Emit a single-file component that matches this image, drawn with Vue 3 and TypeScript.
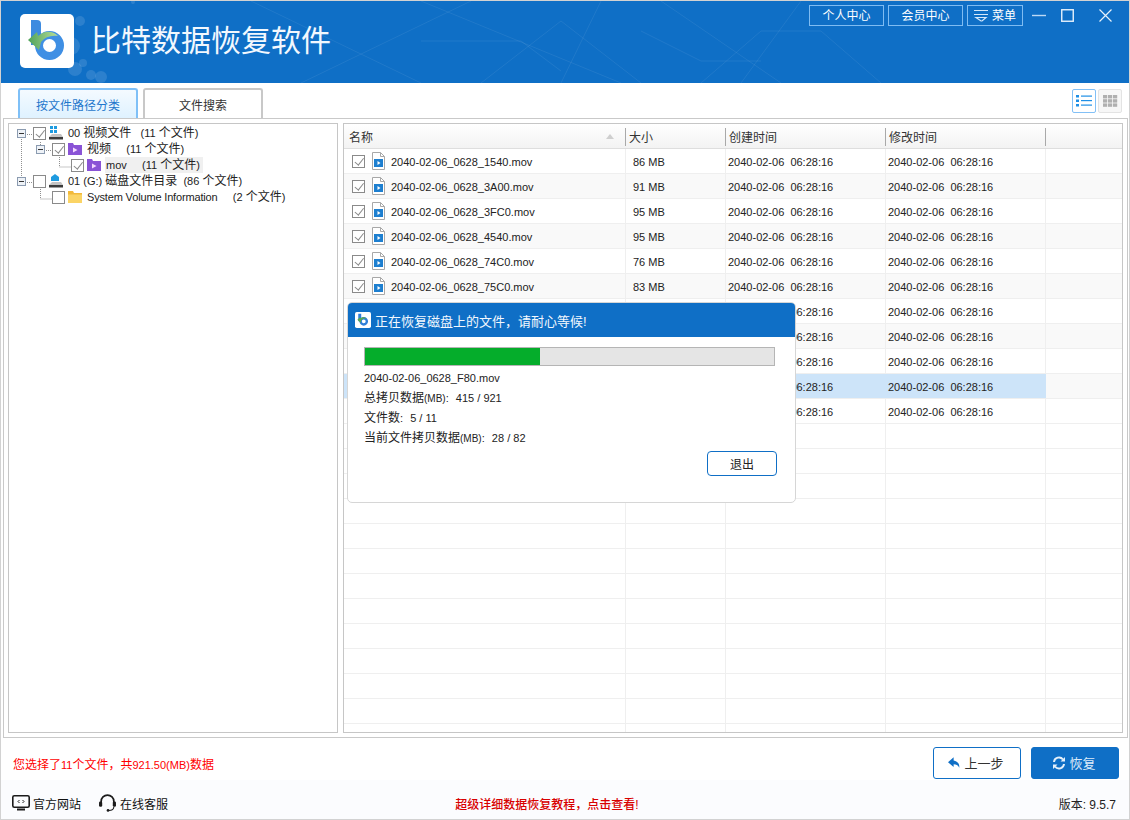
<script setup lang="ts">
interface Row { name: string; size: string; time: string; selected?: boolean }
const t = '2040-02-06  06:28:16'
const files: Row[] = [
  { name: '2040-02-06_0628_1540.mov', size: '86 MB', time: t },
  { name: '2040-02-06_0628_3A00.mov', size: '91 MB', time: t },
  { name: '2040-02-06_0628_3FC0.mov', size: '95 MB', time: t },
  { name: '2040-02-06_0628_4540.mov', size: '95 MB', time: t },
  { name: '2040-02-06_0628_74C0.mov', size: '76 MB', time: t },
  { name: '2040-02-06_0628_75C0.mov', size: '83 MB', time: t },
  { name: '2040-02-06_0628_8A40.mov', size: '88 MB', time: t },
  { name: '2040-02-06_0628_9B80.mov', size: '90 MB', time: t },
  { name: '2040-02-06_0628_C100.mov', size: '84 MB', time: t },
  { name: '2040-02-06_0628_F80.mov', size: '82 MB', time: t, selected: true },
  { name: '2040-02-06_0628_FA40.mov', size: '81 MB', time: t },
]
const blanks = Array.from({ length: 13 }, (_, i) => i)
const columns = ['名称', '大小', '创建时间', '修改时间']
const lines = [
  'M250 0L420 82', 'M300 82L470 0', 'M420 0L620 82', 'M480 82L560 20L640 82', 'M660 0L780 82',
  'M600 0L560 82', 'M700 82L760 30H820L880 82', 'M420 40H520L560 70', 'M640 30L700 60H760', 'M800 0L740 82',
]
const dots = [[79, 20, 5], [70, 45, 9], [82, 62, 4], [74, 68, 7], [90, 74, 5], [100, 76, 6], [132, 1, 2], [62, 36, 2]]
</script>

<template>
  <div class="window">
    <header class="top">
      <svg class="deco" viewBox="0 0 1128 82" aria-hidden="true">
        <path v-for="(l, i) in lines" :key="i" :d="l" fill="none" stroke="#fff" stroke-opacity=".07" />
        <circle v-for="(d, i) in dots" :key="i" :cx="d[0]" :cy="d[1]" :r="d[2]" fill="#fff" fill-opacity=".12" />
      </svg>
      <div class="brand">
        <svg class="logo" viewBox="0 0 54 54">
          <defs>
            <linearGradient id="arrowGrad" x1="0" y1="0" x2="1" y2="0">
              <stop offset="0" stop-color="#4fa35a" />
              <stop offset="1" stop-color="#b7dd98" />
            </linearGradient>
          </defs>
          <rect width="54" height="54" rx="5" fill="#fff" />
          <path d="M11 6h6a4 4 0 0 1 4 4v21h-10z" fill="#3d8be0" />
          <circle cx="29.500" cy="31.500" r="10.500" fill="none" stroke="#3f8fe4" stroke-width="8" />
          <path d="M8 26L17 18l1 4C24 17 32 16 38 22 31 21 25 23 21 28l-2 8z" fill="url(#arrowGrad)" />
        </svg>
        <h1>比特数据恢复软件</h1>
      </div>
      <div class="top-actions">
        <button class="top-btn wide">个人中心</button>
        <button class="top-btn wide">会员中心</button>
        <button class="top-btn menu">
          <svg width="15" height="14" viewBox="0 0 15 14"><path d="M0 2.500h14M0 6.500h14M2 9.500h10l-4 3.500h-1z" fill="none" stroke="#d5e8fa" stroke-width="1.200" /></svg>
          菜单
        </button>
        <div class="win-controls">
          <svg width="14" height="14" viewBox="0 0 14 14"><path d="M0 7.500h14" stroke="#bcd9f5" stroke-width="1.400" /></svg>
          <svg width="13" height="13" viewBox="0 0 13 13"><rect x=".75" y=".75" width="11.500" height="11.500" fill="none" stroke="#e6f1fb" stroke-width="1.400" /></svg>
          <svg width="13" height="13" viewBox="0 0 13 13"><path d="M.5.5l12 12M12.500.5l-12 12" stroke="#e6f1fb" stroke-width="1.200" /></svg>
        </div>
      </div>
    </header>

    <div class="tabs-row">
      <div class="tabs">
        <div class="tab active">按文件路径分类</div>
        <div class="tab">文件搜索</div>
      </div>
      <div class="views">
        <div class="view on">
          <svg width="16" height="12" viewBox="0 0 16 12" fill="#1e8fe6"><rect width="3" height="2.500" /><rect y="4.500" width="3" height="2.500" /><rect y="9" width="3" height="2.500" /><rect x="5" y=".5" width="11" height="1.200" /><rect x="5" y="5" width="11" height="1.200" /><rect x="5" y="9.500" width="11" height="1.200" /></svg>
        </div>
        <div class="view">
          <svg width="15" height="12" viewBox="0 0 15 12" fill="#b0b0b0"><template v-for="r in 3" :key="r"><rect v-for="c in 3" :key="c" :x="(c - 1) * 5" :y="(r - 1) * 4.200" width="4.200" height="3.400" /></template></svg>
        </div>
      </div>
    </div>

    <main class="panel">
      <section class="tree">
        <svg class="tree-lines" width="110" height="90" viewBox="0 0 110 90" aria-hidden="true">
          <path d="M12.500 15v40M31.500 18v6M50.500 33v10H62M31.500 65v10H43M18 10.500h6M37 26.500h6M18 58.500h6" fill="none" stroke="#8f8f8f" stroke-dasharray="1 1" />
        </svg>
        <div class="node" style="padding-left: 8px">
          <span class="exp"><i></i></span><span class="check on lead"></span>
          <svg class="ico" viewBox="0 0 14 14"><rect x="1" y="0" width="3" height="3" fill="#1e9be0" /><rect x="5" y="0" width="3" height="3" fill="#1e9be0" /><rect x="1" y="4" width="3" height="3" fill="#1e9be0" /><rect x="5" y="4" width="3" height="3" fill="#1e9be0" /><path d="M3 8h9l2 3H0z" fill="#c4c4c4" /><path d="M0 11h14v2.500H0z" fill="#3c3c3c" /></svg>
          <span class="label">00 <span class="zh">视频文件</span>&nbsp;&nbsp;&nbsp;(11 <span class="zh">个文件</span>)</span>
        </div>
        <div class="node" style="padding-left: 27px">
          <span class="exp"><i></i></span><span class="check on lead"></span>
          <svg class="ico" viewBox="0 0 14 14"><path d="M0 1h5l1 2h8v10H0z" fill="#8a53d6" /><path d="M5 5.500v5l4.500-2.500z" fill="#f4d9ff" /></svg>
          <span class="label"><span class="zh">视频</span>&nbsp;&nbsp;&nbsp;&nbsp;&nbsp;(11 <span class="zh">个文件</span>)</span>
        </div>
        <div class="node" style="padding-left: 62px">
          <span class="check on"></span>
          <svg class="ico" viewBox="0 0 14 14"><path d="M0 1h5l1 2h8v10H0z" fill="#8a53d6" /><path d="M5 5.500v5l4.500-2.500z" fill="#f4d9ff" /></svg>
          <span class="label hl">mov&nbsp;&nbsp;&nbsp;&nbsp;&nbsp;(11 <span class="zh">个文件</span>)</span>
        </div>
        <div class="node" style="padding-left: 8px">
          <span class="exp"><i></i></span><span class="check lead"></span>
          <svg class="ico" viewBox="0 0 14 14"><path d="M2 7V3l4-3 4 3v4z" fill="#1e9be0" /><path d="M3 8h9l2 3H0z" fill="#c4c4c4" /><path d="M0 11h14v2.500H0z" fill="#3c3c3c" /></svg>
          <span class="label">01 (G:) <span class="zh">磁盘文件目录</span>&nbsp;&nbsp;(86 <span class="zh">个文件</span>)</span>
        </div>
        <div class="node" style="padding-left: 43px">
          <span class="check"></span>
          <svg class="ico" viewBox="0 0 14 14"><path d="M0 1h5l1 2h8v10H0z" fill="#f2b93a" /><path d="M0 4.500h14V13H0z" fill="#fbd465" /></svg>
          <span class="label"><span class="tight">System Volume Information</span>&nbsp;&nbsp;&nbsp;&nbsp;&nbsp;(2 <span class="zh">个文件</span>)</span>
        </div>
      </section>

      <section class="list">
        <div class="grid head">
          <div v-for="(c, i) in columns" :key="c" class="hcell">
            {{ c }}
            <span v-if="i === 0" class="sort"></span>
          </div>
          <div class="hcell last"></div>
        </div>
        <div v-for="(f, i) in files" :key="f.name" class="grid row" :class="{ alt: i % 2 === 1, sel: f.selected }">
          <div class="cell name">
            <span class="check on"></span>
            <svg class="fileico" viewBox="0 0 13 18"><path d="M.5.5h8l4 4v13H.5z" fill="#fff" stroke="#a8a8a8" /><path d="M8.500.5v4h4" fill="none" stroke="#a8a8a8" /><rect x="2" y="7" width="9" height="8" fill="#1d7fd0" /><path d="M5.500 9v4l3-2z" fill="#fff" /></svg>
            <span class="txt">{{ f.name }}</span>
          </div>
          <div class="cell size"><span class="txt">{{ f.size }}</span></div>
          <div class="cell date"><span class="txt">{{ f.time }}</span></div>
          <div class="cell date"><span class="txt">{{ f.time }}</span></div>
          <div class="cell end"></div>
        </div>
        <div v-for="b in blanks" :key="b" class="grid row blank">
          <div class="cell"></div><div class="cell"></div><div class="cell"></div><div class="cell"></div><div class="cell end"></div>
        </div>
      </section>

      <div class="dialog">
        <div class="dialog-head">
          <svg width="16" height="16" viewBox="0 0 54 54">
            <rect width="54" height="54" rx="6" fill="#fff" />
            <path d="M11 6h10v25h-10z" fill="#2f7fd8" />
            <circle cx="29.500" cy="31.500" r="10.500" fill="none" stroke="#2f7fd8" stroke-width="8" />
            <path d="M8 26L17 18l1 4C24 17 32 16 38 22 31 21 25 23 21 28l-2 8z" fill="#5aa84f" />
          </svg>
          <span>正在恢复磁盘上的文件，请耐心等候!</span>
        </div>
        <div class="dialog-body">
          <div class="bar"><div class="fill" :style="{ width: '42.8%' }"></div></div>
          <p>2040-02-06_0628_F80.mov</p>
          <p><span class="zh">总拷贝数据</span><small>(MB)</small>:&nbsp;&nbsp;<span class="val">415 / 921</span></p>
          <p><span class="zh">文件数</span>:&nbsp;&nbsp;<span class="val">5 / 11</span></p>
          <p><span class="zh">当前文件拷贝数据</span><small>(MB)</small>:&nbsp;&nbsp;<span class="val">28 / 82</span></p>
          <div class="dialog-actions"><button class="exit">退出</button></div>
        </div>
      </div>
    </main>

    <div class="status">
      <span class="selected-info"><span class="zh">您选择了</span>11<span class="zh">个文件，共</span>921.50(MB)<span class="zh">数据</span></span>
      <div class="status-btns">
        <button class="action ghost">
          <svg width="13" height="12" viewBox="0 0 15 13"><path d="M6.500 0L0 5.500 6.500 11V8c3 0 5 .8 6.500 4 .5-5-2.500-8-6.500-8.500z" fill="#0f6fc6" /></svg>
          上一步
        </button>
        <button class="action solid">
          <svg width="14" height="14" viewBox="0 0 14 14"><path d="M2 6a5 5 0 0 1 9-2.500M12 8a5 5 0 0 1-9 2.500" fill="none" stroke="#e4f0fb" stroke-width="2" /><path d="M13 1v4.500H8.500zM1 13V8.500h4.500z" fill="#e4f0fb" /></svg>
          恢复
        </button>
      </div>
    </div>

    <footer class="foot">
      <div class="links">
        <span class="link">
          <svg width="18" height="16" viewBox="0 0 18 16"><rect x=".8" y=".8" width="16.400" height="11.400" rx="1.500" fill="none" stroke="#1b1b1b" stroke-width="1.600" /><path d="M5 13.500h8v2H5z" fill="#1b1b1b" /><path d="M7.500 5L6 6.500 7.500 8M10.500 5L12 6.500 10.500 8" fill="none" stroke="#1b1b1b" /></svg>
          官方网站
        </span>
        <span class="link">
          <svg width="19" height="18" viewBox="0 0 17 17"><path d="M2.500 9V7a6 6 0 0 1 12 0v2" fill="none" stroke="#1b1b1b" stroke-width="1.600" /><rect x="0.500" y="7" width="3" height="5" rx="1.200" fill="#1b1b1b" /><rect x="13.500" y="7" width="3" height="5" rx="1.200" fill="#1b1b1b" /><path d="M14.500 12c0 2.500-2 3.500-5 3.500" fill="none" stroke="#1b1b1b" /><circle cx="9" cy="15.500" r="1.300" fill="#1b1b1b" /></svg>
          在线客服
        </span>
      </div>
      <span class="tutorial">超级详细数据恢复教程，点击查看!</span>
      <span class="version"><span class="zh">版本</span>: 9.5.7</span>
    </footer>
  </div>
</template>

<style scoped>
.window {
  width: 1130px;
  height: 820px;
  box-sizing: border-box;
  border: 1px solid #d2d2d2;
  background: #fff;
  display: flex;
  flex-direction: column;
  font-family: "Liberation Sans", "Noto Sans CJK SC", sans-serif;
  font-size: 11px;
  color: #222;
  overflow: hidden;
}
.zh { font-size: 12px; }
.tight { letter-spacing: -0.16px; }
button { font-family: inherit; cursor: pointer; }
.top {
  height: 82px;
  flex: none;
  background: #0f6fc6;
  position: relative;
  display: flex;
  justify-content: space-between;
  color: #fff;
}
.deco { position: absolute; inset: 0; width: 100%; height: 100%; }
.brand { display: flex; align-items: center; gap: 17px; padding: 0 0 2px 19px; position: relative; }
.logo { width: 54px; height: 54px; }
h1 { margin: 0; font-size: 30px; font-weight: 400; color: #f2f8fe; line-height: 1; }
.top-actions { display: flex; align-items: flex-start; gap: 4px; padding: 4px 0 0; position: relative; height: 22px; }
.top-btn {
  height: 21px;
  border: 1px solid #7fbcf2;
  background: transparent;
  color: #fff;
  font-size: 12px;
  padding: 0 0 2px;
  display: flex;
  align-items: center;
  justify-content: center;
}
.top-btn.wide { width: 75px; }
.top-btn.menu { width: 56px; gap: 3px; }
.win-controls { display: flex; align-items: center; height: 20px; margin-left: 5px; gap: 15px; padding-right: 17px; }
.win-controls svg:last-child { margin-left: 10px; }
.tabs-row {
  height: 35px;
  flex: none;
  display: flex;
  justify-content: space-between;
  padding: 5px 7px 0 17px;
  box-sizing: border-box;
}
.tabs { display: flex; gap: 5px; }
.tab {
  width: 120px;
  height: 30px;
  box-sizing: border-box;
  border: 2px solid #c8c8c8;
  border-bottom: 0;
  border-radius: 3px 3px 0 0;
  display: flex;
  align-items: center;
  justify-content: center;
  font-size: 12px;
  color: #333;
}
.tab.active {
  border-color: #7fc0f7;
  background: linear-gradient(#f4faff, #dff2ff);
  color: #1f77cc;
}
.views { display: flex; gap: 2px; padding-top: 1px; }
.view {
  width: 24px;
  height: 24px;
  box-sizing: border-box;
  border: 1px solid #e3e3e3;
  border-radius: 2px;
  display: flex;
  align-items: center;
  justify-content: center;
  background: #f7f7f7;
}
.view.on { border-color: #82c0f6; background: #fff; }
.panel {
  height: 620px;
  flex: none;
  margin: 0 1px 0 2px;
  box-sizing: border-box;
  border: 1px solid #c9c9c9;
  padding: 4px;
  display: flex;
  gap: 5px;
  position: relative;
}
.tree {
  width: 330px;
  flex: none;
  box-sizing: border-box;
  border: 1px solid #c6c6c6;
  padding-top: 1px;
  position: relative;
}
.tree-lines { position: absolute; left: 0; top: 0; }
.node { height: 16px; display: flex; align-items: center; position: relative; white-space: pre; }
.exp {
  width: 9px;
  height: 9px;
  box-sizing: border-box;
  border: 1px solid #8b9bb0;
  background: #eef2f7;
  display: flex;
  align-items: center;
  justify-content: center;
  flex: none;
}
.exp i { display: block; width: 5px; height: 1px; background: #333; }
.check {
  width: 13px;
  height: 13px;
  box-sizing: border-box;
  border: 1px solid #8a8a8a;
  background: #fff;
  flex: none;
  position: relative;
}
.check.lead { margin-left: 7px; }
.check.on::after {
  content: "";
  position: absolute;
  left: 3.5px;
  top: 0.5px;
  width: 3.500px;
  height: 7.500px;
  border: solid #8a8a8a;
  border-width: 0 1px 1px 0;
  transform: rotate(38deg);
}
.ico { width: 14px; height: 14px; margin: 0 5px 0 3px; flex: none; }
.label { line-height: 16px; }
.label.hl { background: #f0f0f0; padding: 0 3px 0 1px; margin-left: -1px; }
.list { flex: 1; box-sizing: border-box; border: 1px solid #c6c6c6; overflow: hidden; }
.grid { display: grid; grid-template-columns: 282px 100px 160px 160px 1fr; }
.head {
  height: 25px;
  box-sizing: border-box;
  background: linear-gradient(#fff, #f3f3f3);
  border-bottom: 1px solid #dedede;
}
.hcell {
  display: flex;
  align-items: center;
  padding: 0 0 0 3px;
  font-size: 12px;
  position: relative;
  color: #333;
}
.hcell:first-child { padding-left: 5px; }
.hcell::after {
  content: "";
  position: absolute;
  right: 0;
  top: 4px;
  bottom: 2px;
  width: 1px;
  background: #a9a9a9;
}
.hcell.last::after { display: none; }
.sort {
  position: absolute;
  right: 12px;
  top: 10px;
  border: 4px solid transparent;
  border-top: 0;
  border-bottom: 5px solid #cfcfcf;
}
.row { height: 25px; box-sizing: border-box; border-bottom: 1px solid #efefef; }
.row.alt { background: #f9f9f9; }
.cell {
  border-right: 1px solid #efefef;
  display: flex;
  align-items: center;
  padding-left: 7px;
  white-space: pre;
  min-width: 0;
}
.cell.end { border-right: 0; }
.txt { padding-top: 1px; }
.date { padding-left: 2px; }
.name { padding-left: 8px; gap: 7px; }
.name .txt { margin-left: -1px; }
.fileico { width: 13px; height: 18px; flex: none; }
.row.sel .cell:not(.end) { background: #cde4f9; border-right-color: #cde4f9; }
.dialog {
  position: absolute;
  left: 343px;
  top: 183px;
  width: 449px;
  height: 201px;
  box-sizing: border-box;
  background: #fff;
  border: 1px solid #d6d6d6;
  border-radius: 5px;
  overflow: hidden;
  display: flex;
  flex-direction: column;
}
.dialog-head {
  height: 34px;
  flex: none;
  background: #0f6fc6;
  color: #f2f8fe;
  display: flex;
  align-items: center;
  gap: 4px;
  padding-left: 7px;
  font-size: 13px;
}
.dialog-body { padding: 10px 18px 0 16px; }
.bar {
  height: 19px;
  box-sizing: border-box;
  border: 1px solid #b5b5b5;
  background: #e5e5e5;
  margin: 0 2px 2px 0;
}
.fill { height: 100%; background: #05ad2b; }
.dialog-body p { margin: 0; height: 20px; line-height: 20px; font-size: 11px; color: #222; white-space: pre; }
small { font-size: 10px; }
.val { margin-left: 1px; }
.dialog-actions { display: flex; justify-content: flex-end; margin-top: 3px; }
.exit {
  width: 70px;
  height: 25px;
  background: #fff;
  border: 1px solid #0f6fc6;
  border-radius: 4px;
  font-size: 12px;
  color: #222;
  padding: 0;
}
.status {
  height: 42px;
  flex: none;
  display: flex;
  align-items: center;
  justify-content: space-between;
  padding: 0 10px 0 12px;
}
.selected-info { color: #f00; padding-top: 9px; }
.status-btns { display: flex; gap: 10px; padding-top: 7px; }
.action {
  width: 88px;
  height: 32px;
  box-sizing: border-box;
  border: 1px solid #0f6fc6;
  border-radius: 3px;
  font-size: 13px;
  display: flex;
  align-items: center;
  justify-content: center;
  gap: 3px;
  padding: 0 2px 0 0;
}
.ghost { background: #fff; color: #333; }
.solid { background: #0f6fc6; color: #dcebf9; }
.foot {
  flex: 1;
  background: #fbfcfe;
  display: grid;
  grid-template-columns: 1fr auto 1fr;
  align-items: center;
  padding: 7px 13px 0 11px;
}
.links { display: flex; gap: 17px; }
.link { display: flex; align-items: center; gap: 3px; font-size: 12px; color: #111; }
.tutorial { color: #d80000; font-size: 12px; font-weight: 500; margin-right: 34px; }
.version { justify-self: end; font-size: 12px; color: #222; }
</style>
